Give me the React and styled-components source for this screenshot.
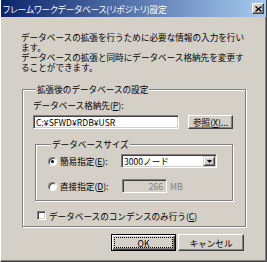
import React from 'react';
import styled, { createGlobalStyle } from 'styled-components';

const Global = createGlobalStyle`
  html, body { margin: 0; padding: 0; background: #d4d0c8; }
  body { font-family: "Noto Sans CJK JP", "Liberation Sans", sans-serif; }
  * { box-sizing: border-box; }
`;

const FONT = `"Noto Sans CJK JP", "Liberation Sans", sans-serif`;

const Window = styled.div`
  width: 267px;
  height: 262px;
  background: #d4d0c8;
  border-left: 1px solid #ffffff;
  border-right: 1px solid #404040;
  border-bottom: 1px solid #404040;
  box-shadow: inset -1px -1px #808080;
  display: flex;
  flex-direction: column;
  overflow: hidden;
  font-family: ${FONT};
  font-size: 8.6px;
  color: #000;
`;

const TitleBar = styled.div`
  height: 17px;
  flex: none;
  display: flex;
  align-items: center;
  justify-content: space-between;
  padding: 0 2px 0 2px;
  background: linear-gradient(to right, #0a246a, #a6caf0);
`;

const TitleText = styled.span`
  color: #fff;
  font-size: 8.6px;
  line-height: 10px;
  white-space: nowrap;
  font-feature-settings: "palt";
`;

const CloseBox = styled.div`
  width: 12px;
  height: 11px;
  display: flex;
  align-items: center;
  justify-content: center;
  background: #d4d0c8;
  border-top: 1px solid #fff;
  border-left: 1px solid #fff;
  border-right: 1px solid #404040;
  border-bottom: 1px solid #404040;
  box-shadow: inset -1px -1px #808080;
`;

const Body = styled.div`
  flex: 1;
  display: flex;
  flex-direction: column;
  padding-left: 20px;
`;

const Description = styled.p`
  margin: 15px 0 0 0;
  line-height: 10px;
  white-space: nowrap;
`;

const Group = styled.fieldset`
  margin: ${p => p.$mt}px 0 0 ${p => p.$ml}px;
  width: ${p => p.$w}px;
  padding: ${p => p.$pad};
  border: 1px solid #808080;
  box-shadow: inset 1px 1px #ffffff, 1px 1px #ffffff;
  display: flex;
  flex-direction: column;
  min-width: 0;
`;

const Legend = styled.legend`
  margin-left: ${p => p.$ml}px;
  padding: 0 1px;
  line-height: 10px;
  background: #d4d0c8;
  white-space: nowrap;
`;

const Label = styled.div`
  line-height: 10px;
  white-space: nowrap;
  width: ${p => (p.$w ? `${p.$w}px` : 'auto')};
  flex: none;
`;

const U = styled.span`
  text-decoration: underline;
  text-underline-offset: 1px;
`;

const Row = styled.div`
  display: flex;
  align-items: center;
  height: ${p => p.$h}px;
  margin-top: ${p => p.$mt || 0}px;
  margin-left: ${p => p.$ml || 0}px;
  gap: ${p => p.$gap || 0}px;
`;

const Field = styled.div`
  width: ${p => p.$w}px;
  height: 14px;
  flex: none;
  margin-left: ${p => p.$ml || 0}px;
  background: ${p => (p.$disabled ? '#d4d0c8' : '#ffffff')};
  color: ${p => (p.$disabled ? '#808080' : '#000')};
  border: 1px solid;
  border-color: #808080 #ffffff #ffffff #808080;
  box-shadow: inset 1px 1px #404040, inset -1px -1px #d4d0c8;
  display: flex;
  align-items: center;
  justify-content: ${p => (p.$right ? 'flex-end' : 'flex-start')};
  padding: 0 3px 0 2px;
  line-height: 10px;
  white-space: nowrap;
  overflow: hidden;
`;

const Combo = styled(Field)`
  padding: 0 1px 0 2px;
  justify-content: space-between;
`;

const DropButton = styled.div`
  width: 12px;
  height: 10px;
  display: flex;
  align-items: center;
  justify-content: center;
  background: #d4d0c8;
  border-top: 1px solid #d4d0c8;
  border-left: 1px solid #d4d0c8;
  border-right: 1px solid #404040;
  border-bottom: 1px solid #404040;
  box-shadow: inset 1px 1px #ffffff, inset -1px -1px #808080;
`;

const PushButton = styled.button`
  width: ${p => p.$w}px;
  height: ${p => p.$h}px;
  flex: none;
  margin: 0;
  padding: ${p => (p.$default ? '2px' : '0')};
  font-family: ${FONT};
  font-size: 8.6px;
  line-height: 10px;
  color: #000;
  background: #d4d0c8;
  display: flex;
  align-items: stretch;
  justify-content: center;
  border: 1px solid;
  border-color: ${p => (p.$default ? '#000 #000 #000 #000' : '#fff #404040 #404040 #fff')};
  box-shadow: ${p =>
    p.$default
      ? 'inset 1px 1px #fff, inset -1px -1px #404040, inset -2px -2px #808080'
      : 'inset -1px -1px #808080'};
`;

const ButtonFace = styled.span`
  flex: 1;
  display: flex;
  align-items: center;
  justify-content: center;
  border: 1px dotted ${p => (p.$focus ? '#000' : 'transparent')};
  white-space: nowrap;
`;

const Radio = styled.span`
  width: 9px;
  height: 9px;
  flex: none;
  border-radius: 50%;
  background: #fff;
  border: 1px solid;
  border-color: #808080 #ffffff #ffffff #808080;
  box-shadow: inset 1px 1px #404040;
  display: flex;
  align-items: center;
  justify-content: center;
  &::after {
    content: '';
    width: 3px;
    height: 3px;
    border-radius: 50%;
    background: ${p => (p.$checked ? '#000' : 'transparent')};
  }
`;

const Check = styled.span`
  width: 9px;
  height: 9px;
  flex: none;
  background: #fff;
  border: 1px solid;
  border-color: #808080 #ffffff #ffffff #808080;
  box-shadow: inset 1px 1px #404040, inset -1px -1px #d4d0c8;
`;

const Unit = styled.span`
  color: #808080;
  line-height: 10px;
`;

const Footer = styled.div`
  display: flex;
  justify-content: flex-end;
  gap: 2px;
  margin-top: 7px;
  padding-right: 22px;
`;

export default function App() {
  return (
    <>
      <Global />
      <Window>
        <TitleBar>
          <TitleText>フレームワークデータベース(リポジトリ)設定</TitleText>
          <CloseBox>
            <svg width="7" height="6" viewBox="0 0 7 6">
              <path d="M0.5 0.5 L6.5 5.5 M6.5 0.5 L0.5 5.5" stroke="#000" strokeWidth="1.4" />
            </svg>
          </CloseBox>
        </TitleBar>
        <Body>
          <Description>
            データベースの拡張を行うために必要な情報の入力を行い
            <br />
            ます。
            <br />
            データベースの拡張と同時にデータベース格納先を変更す
            <br />
            ることができます。
          </Description>
          <Group $mt={12} $ml={1} $w={224} $pad="6px 12px 6px 10px">
            <Legend $ml={3}>拡張後のデータベースの設定</Legend>
            <Label>
              データベース格納先(<U>P</U>):
            </Label>
            <Row $h={14} $mt={5} $gap={9}>
              <Field $w={146}>C:¥SFWD¥RDB¥USR</Field>
              <PushButton $w={45} $h={14}>
                <ButtonFace>
                  参照(<U>X</U>)...
                </ButtonFace>
              </PushButton>
            </Row>
            <Group $mt={10} $ml={2} $w={198} $pad="5px 4px 7px 12px">
              <Legend $ml={3}>データベースサイズ</Legend>
              <Row $h={14} $gap={3}>
                <Radio $checked />
                <Label $w={58}>
                  簡易指定(<U>E</U>):
                </Label>
                <Combo $w={96}>
                  <span>3000ノード</span>
                  <DropButton>
                    <svg width="5" height="3" viewBox="0 0 5 3">
                      <path d="M0 0 H5 L2.5 3 Z" fill="#000" />
                    </svg>
                  </DropButton>
                </Combo>
              </Row>
              <Row $h={14} $mt={11} $gap={3}>
                <Radio />
                <Label $w={58}>
                  直接指定(<U>D</U>):
                </Label>
                <Field $w={45} $ml={1} $disabled $right>
                  266
                </Field>
                <Unit>MB</Unit>
              </Row>
            </Group>
            <Row $h={9} $mt={10} $ml={4} $gap={3}>
              <Check />
              <Label>
                データベースのコンデンスのみ行う(<U>C</U>)
              </Label>
            </Row>
          </Group>
          <Footer>
            <PushButton $w={65} $h={17} $default>
              <ButtonFace $focus>OK</ButtonFace>
            </PushButton>
            <PushButton $w={66} $h={17}>
              <ButtonFace>キャンセル</ButtonFace>
            </PushButton>
          </Footer>
        </Body>
      </Window>
    </>
  );
}
